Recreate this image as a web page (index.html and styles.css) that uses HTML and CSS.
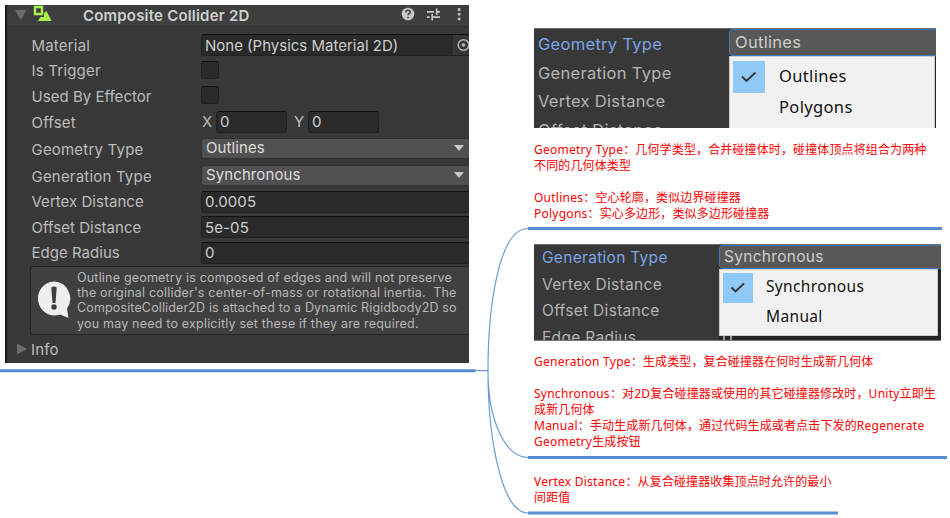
FILE: index.html
```
<!DOCTYPE html>
<html lang="zh-CN">
<head>
<meta charset="utf-8">
<title>Composite Collider 2D</title>
<link rel="stylesheet" href="styles.css">
</head>
<body>
<main class="map">
  <svg class="links" width="950" height="518" viewBox="0 0 950 518" fill="none">
    <path class="thin" d="M475 370.7H488C488 310 498 228.5 528 228.5M488 370.7C488 420 505 457.5 528 457.5M488 370.7C488 440 502 513 528 513"/>
    <path class="thick" d="M0 370.7H475.5M528 228.5H942M528 457.5H947M528 513H838"/>
  </svg>

  <section class="inspector">
    <header class="head">
      <svg class="fold" width="12" height="10" viewBox="0 0 12 10"><path d="M0 0H11.5L5.8 10Z" fill="#6c6c6c"/></svg>
      <svg class="logo" width="20" height="17" viewBox="0 0 20 17"><path d="M2 2H9V9H2Z" fill="none" stroke="#a6f24f" stroke-width="2.4"/><path d="M5 16L7.5 12H11V8L13.5 6L18.5 16Z" fill="#a6f24f"/></svg>
      <h1 class="title">Composite Collider 2D</h1>
      <svg class="tools" width="68" height="18" viewBox="0 0 68 18">
        <circle cx="8" cy="9" r="6.3" fill="#c8c8c8"/>
        <path d="M5.9 7.4C5.9 4.4 10.2 4.6 10.2 7.2C10.2 8.8 8.1 8.5 8.1 10.3M8.1 11.7V13.2" fill="none" stroke="#3e3e3e" stroke-width="1.6"/>
        <path d="M27 6.8H34M37 6.8H40M36.7 3.5V10M27 12.2H29.5M32.5 12.2H40M32.2 9V15.4" fill="none" stroke="#c8c8c8" stroke-width="1.7"/>
        <path d="M57.8 3.3h2.6v2.6h-2.6zM57.8 8h2.6v2.6h-2.6zM57.8 12.7h2.6v2.6h-2.6z" fill="#c8c8c8"/>
      </svg>
    </header>
    <div class="props">
      <div class="row"><span class="label">Material</span><div class="field object"><span>None (Physics Material 2D)</span>
        <i class="picker"><svg width="16" height="20" viewBox="0 0 16 20"><circle cx="10.5" cy="10" r="5.3" fill="none" stroke="#bdbdbd" stroke-width="1.4"/><circle cx="10.5" cy="10" r="1.8" fill="#bdbdbd"/></svg></i></div></div>
      <div class="row"><span class="label">Is Trigger</span><i class="check"></i></div>
      <div class="row"><span class="label tight">Used By Effector</span><i class="check"></i></div>
      <div class="row"><span class="label">Offset</span><div class="vector"><span>X</span><span class="field num">0</span><span class="axis-y">Y</span><span class="field num">0</span></div></div>
      <div class="row pop first"><span class="label">Geometry Type</span><div class="select">Outlines<i class="arrow"></i></div></div>
      <div class="row pop"><span class="label">Generation Type</span><div class="select">Synchronous<i class="arrow"></i></div></div>
      <div class="row"><span class="label tight">Vertex Distance</span><div class="field">0.0005</div></div>
      <div class="row"><span class="label tight">Offset Distance</span><div class="field">5e-05</div></div>
      <div class="row"><span class="label tight">Edge Radius</span><div class="field">0</div></div>
    </div>
    <div class="help">
      <svg width="36" height="40" viewBox="0 0 36 40"><path d="M17 1.5A16.5 17 0 1 0 23 34.5L31.5 38L30 28.5A16.5 17 0 0 0 17 1.5Z" fill="#eee"/><path d="M14.3 7.5Q17 5.5 19.7 7.5L18.5 23H15.5Z" fill="#3f3f3f"/><circle cx="17" cy="27" r="2.7" fill="#3f3f3f"/></svg>
      <p>Outline geometry is composed of edges and will not preserve<br>the original collider's center-of-mass or rotational inertia.&nbsp; The<br><span class="dense">CompositeCollider2D is attached to a Dynamic Rigidbody2D so</span><br>you may need to explicitly set these if they are required.</p>
    </div>
    <div class="info"><svg width="12" height="12" viewBox="0 0 12 12"><path d="M1 0.5L11 6L1 11.5Z" fill="#6c6c6c"/></svg><span>Info</span></div>
  </section>

  <section class="node geometry">
    <div class="shot">
      <div class="names"><span class="active">Geometry Type</span><span>Generation Type</span><span>Vertex Distance</span><span>Offset Distance</span></div>
      <div class="choice">
        <div class="current">Outlines</div>
        <div class="menu"><div class="item"><i class="tick"><svg width="18" height="14" viewBox="0 0 18 14"><path d="M2 6.5L6.5 11L15.5 2.5" fill="none" stroke="#333" stroke-width="1.9"/></svg></i><span>Outlines</span></div><div class="item"><i></i><span>Polygons</span></div></div>
      </div>
    </div>
    <p class="note"><b>Geometry Type</b>：几何学类型，合并碰撞体时，碰撞体顶点将组合为两种<br>不同的几何体类型<br><br><b>Outlines</b>：空心轮廓，类似边界碰撞器<br><b>Polygons</b>：实心多边形，类似多边形碰撞器</p>
  </section>

  <section class="node generation">
    <div class="shot">
      <div class="names"><span class="active">Generation Type</span><span>Vertex Distance</span><span>Offset Distance</span><span>Edge Radius</span></div>
      <div class="choice">
        <div class="current">Synchronous</div>
        <div class="menu"><div class="item"><i class="tick"><svg width="18" height="14" viewBox="0 0 18 14"><path d="M2.5 6.5L6.5 10.5L15 2.5" fill="none" stroke="#333" stroke-width="1.9"/></svg></i><span>Synchronous</span></div><div class="item"><i></i><span>Manual</span></div></div>
        <div class="under"><i></i></div>
      </div>
    </div>
    <p class="note"><b>Generation Type</b>：生成类型，复合碰撞器在何时生成新几何体<br><br><b>Synchronous</b>：对<b>2D</b>复合碰撞器或使用的其它碰撞器修改时，<b>Unity</b>立即生<br>成新几何体<br><b>Manual</b>：手动生成新几何体，通过代码生成或者点击下发的<b>Regenerate</b><br><b>Geometry</b>生成按钮</p>
  </section>

  <section class="node vertex">
    <p class="note"><b>Vertex Distance</b>：从复合碰撞器收集顶点时允许的最小<br>间距值</p>
  </section>
</main>
</body>
</html>
```
FILE: styles.css
```
* { box-sizing: border-box; }
body { margin: 0; background: #fff; }
i { font-style: normal; }
.map { position: relative; width: 950px; height: 518px; overflow: hidden; font-family: Inter, sans-serif; }
.links { position: absolute; left: 0; top: 0; }
.thin { stroke: #6c9bd6; stroke-width: 1.2; }
.thick { stroke: #558ed5; stroke-width: 3; }

.inspector { position: absolute; left: 5px; top: 5px; width: 464px; height: 358px; overflow: hidden; background: #383838; border-left: 2px solid #191919; color: #bcbcbc; font-size: 15px; letter-spacing: .2px; white-space: nowrap; }
.head { display: flex; align-items: center; height: 22px; padding-left: 8px; background: #3e3e3e; border-bottom: 1px solid #303030; }
.fold { margin-top: -2px; }
.logo { margin: -4px 0 0 6px; }
.title { margin: -1px 0 0 30px; width: 317px; font-size: 15px; font-weight: 600; letter-spacing: .2px; color: #d0d0d0; }
.tools { margin-top: -3px; }
.props { padding-top: 5.5px; }
.row { display: flex; align-items: center; height: 25.6px; padding-left: 24.5px; }
.label { width: 169.5px; flex: none; }
.tight { letter-spacing: .03px; }
.field { display: flex; align-items: center; flex: 1; height: 22px; padding-left: 3px; background: #2a2a2a; border: 1px solid #212121; border-top-color: #101010; border-right: 0; border-radius: 3px 0 0 3px; color: #cecece; letter-spacing: .1px; }
.object { justify-content: space-between; letter-spacing: 0; }
.picker { display: flex; align-items: center; height: 20px; background: #373737; }
.check { width: 18px; height: 18px; margin-top: -2px; background: #2a2a2a; border: 1px solid #202020; border-top-color: #111; border-radius: 3px; }
.vector { display: flex; align-items: center; padding-left: 1px; margin-top: -1px; }
.vector > span:first-child { width: 14px; }
.vector .num { flex: none; width: 71px; border-right: 1px solid #212121; border-radius: 3px; }
.axis-y { width: 21px; padding-left: 7px; }
.pop.first { height: 28.5px; }
.pop.first .label { padding-top: 1px; }
.select { display: flex; align-items: center; justify-content: space-between; flex: 1; height: 21px; margin-top: -2px; padding: 0 5px 1px 4px; background: #515151; border: 1px solid #303030; border-right: 0; border-radius: 3px 0 0 3px; color: #dedede; letter-spacing: .1px; }
.first .select { margin-top: -2px; }
.arrow { border: 5px solid transparent; border-top: 6px solid #c8c8c8; border-bottom: 0; }
.help { display: flex; align-items: center; height: 69px; margin: 0 0 0 23px; padding-left: 6px; background: #404040; border: 1px solid #262626; border-right: 0; border-radius: 3px 0 0 3px; font-size: 12.5px; line-height: 15.3px; letter-spacing: .2px; }
.help p { margin: 0 0 0 4px; color: #b8b8b8; }
.dense { letter-spacing: .14px; }
.info { display: flex; align-items: center; gap: 3px; height: 29px; padding-left: 9px; }

.node { position: absolute; left: 534px; }
.geometry { top: 28px; }
.generation { top: 244px; }
.vertex { top: 474px; }
.shot { display: flex; overflow: hidden; background: #383838; border-top: 1px solid #6c6c6c; white-space: nowrap; }
.geometry .shot { width: 402px; height: 100px; font-size: 16.5px; }
.generation .shot { width: 407px; height: 97px; font-size: 15.5px; border-bottom: 1px solid #777; }
.names { flex: none; display: flex; flex-direction: column; color: #b4b4b4; letter-spacing: .3px; }
.geometry .names { width: 195px; padding: 1px 0 0 4px; line-height: 28.7px; }
.generation .names { width: 185px; padding: 0 0 0 8px; line-height: 26.7px; }
.names .active { color: #7ba5e6; }
.choice { flex: 1; background: #262626; }
.current { height: 27px; padding-left: 5px; line-height: 25px; background: #585858; border: 1px solid #3a79bb; border-right: 0; border-radius: 4px 0 0 4px; color: #cecece; letter-spacing: .3px; }
.generation .current { height: 24px; line-height: 22px; padding-left: 4px; }
.menu { width: 206px; height: 73px; padding: 4px 3px; background: #f1f1f1; border: 1px solid #ccc; color: #111; font-family: "Noto Sans", sans-serif; letter-spacing: .35px; }
.generation .menu { width: 219px; height: 67px; padding: 3px; }
.item { display: flex; align-items: center; height: 31px; }
.item span { margin-top: -3px; }
.generation .item { height: 29.5px; }
.item i { display: flex; align-items: center; justify-content: center; width: 32px; height: 32px; margin-right: 14px; }
.generation .item i { width: 30px; height: 30px; margin-right: 13px; }
.item .tick { background: #90c8f6; }
.under { padding-left: 4px; }
.under i { display: block; width: 9px; height: 5px; border: 1px solid #999; border-width: 0 2px; }
.note { margin: 0; color: #f00; font: 12px/16px "Noto Sans", "Noto Sans CJK SC", sans-serif; letter-spacing: .13px; white-space: nowrap; }
.note b { font-weight: 400; letter-spacing: .25px; }
.geometry .note { padding-top: 13.5px; }
.generation .note { padding-top: 13px; }
```
